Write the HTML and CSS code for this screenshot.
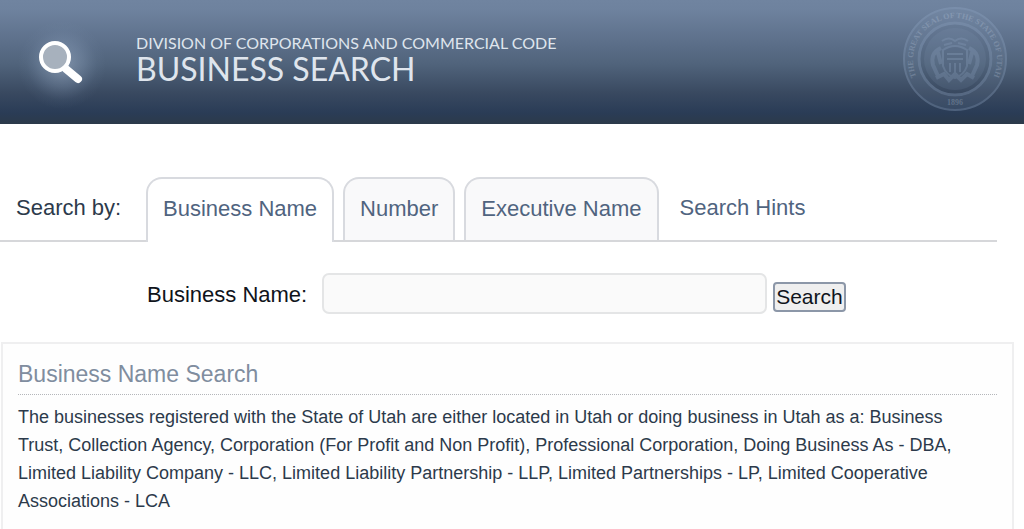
FILE: index.html
```html
<!DOCTYPE html>
<html lang="en">
<head>
<meta charset="utf-8">
<meta name="viewport" content="width=device-width, initial-scale=1">
<title>Business Search</title>
<link rel="stylesheet" href="styles.css">
</head>
<body>
<header class="banner">
  <svg class="lens" viewBox="0 0 90 90" aria-hidden="true">
    <defs>
      <radialGradient id="glow">
        <stop offset="0" stop-color="#b4c4da" stop-opacity=".5"/>
        <stop offset=".5" stop-color="#9db2ce" stop-opacity=".25"/>
        <stop offset=".8" stop-color="#8ea4c2" stop-opacity=".06"/>
        <stop offset="1" stop-color="#8ea4c2" stop-opacity="0"/>
      </radialGradient>
    </defs>
    <circle cx="46" cy="46" r="44" fill="url(#glow)"/>
    <path d="M50 50 62 60" stroke="#fff" stroke-width="8" stroke-linecap="round"/>
    <circle cx="39" cy="38" r="14" fill="#a7b1bd" stroke="#fff" stroke-width="4"/>
  </svg>
  <div class="titles">
    <p class="division">DIVISION OF CORPORATIONS AND COMMERCIAL CODE</p>
    <h1 class="title">BUSINESS SEARCH</h1>
  </div>
  <svg class="seal" viewBox="0 0 106 106" aria-hidden="true">
    <defs>
      <path id="ring" d="M15 72A42 42 0 1 1 91 72"/>
    </defs>
    <g fill="none" stroke="#8fa5c3">
      <circle cx="53" cy="53" r="51" stroke-width="2"/>
      <circle cx="53" cy="53" r="44" stroke-width="13" opacity=".35"/>
      <circle cx="53" cy="53" r="36" stroke-width="3"/>
      <circle cx="53" cy="53" r="31" fill="#8fa5c3" fill-opacity=".35" stroke="none"/>
      <path d="M41 44Q53 36 65 44V60Q62 69 53 72 44 69 41 60Z" fill="#60738e" stroke-width="2"/>
      <path d="M40 35Q47 30 53 35 59 30 66 35M42 39 50 37M56 37 64 39M45 48H61M45 53H61M48 57V66M53 57V68M58 57V66" stroke-width="2"/>
      <path d="M39 42Q28 47 31 59L36 70M67 42Q78 47 75 59L70 70M35 43 39 58M71 43 67 58M34 72 42 68 47 74 53 68 59 74 65 68 72 72" stroke-width="4"/>
    </g>
    <g class="seal-text">
      <text><textPath href="#ring" startOffset="50%">THE GREAT SEAL OF THE STATE OF UTAH</textPath></text>
      <text x="53" y="99">1896</text>
    </g>
  </svg>
</header>
<main>
  <nav class="tabs" aria-label="Search by">
    <span class="tabs-label">Search by:</span>
    <a class="tab tab-active" href="#name" aria-current="page">Business Name</a>
    <a class="tab" href="#number">Number</a>
    <a class="tab" href="#executive">Executive Name</a>
    <a class="hints" href="#hints">Search Hints</a>
  </nav>
  <form class="search">
    <label for="business-name">Business Name:</label>
    <input class="field" id="business-name" type="text">
    <button class="submit" type="submit">Search</button>
  </form>
  <section class="panel">
    <h2 class="panel-title">Business Name Search</h2>
    <p class="panel-text">The businesses registered with the State of Utah are either located in Utah or doing business in Utah as a: Business Trust, Collection Agency, Corporation (For Profit and Non Profit), Professional Corporation, Doing Business As - DBA, Limited Liability Company - LLC, Limited Liability Partnership - LLP, Limited Partnerships - LP, Limited Cooperative Associations - LCA</p>
  </section>
</main>
</body>
</html>
```
FILE: styles.css
```css
* { box-sizing: border-box; }

body {
  margin: 0;
  background: #fff;
  color: #2c3a4b;
  font-family: "Liberation Sans", Arial, sans-serif;
  font-size: 22px;
  line-height: 26px;
}

h1, h2, p { margin: 0; font-weight: 400; }
a { color: #50647f; text-decoration: none; }

.banner {
  display: flex;
  align-items: center;
  height: 124px;
  padding: 0 16px 6px;
  background: linear-gradient(#7084a0 0, #6e829e 8%, #5f728d 30%, #50637b 52%, #394960 75%, #2a3c56 91%, #2c3a4a 100%);
}

.lens { width: 90px; height: 90px; margin-top: 10px; }

.titles {
  flex: 1;
  margin-left: 30px;
  color: #dfe5ed;
  font-family: Lato, sans-serif;
}

.division { font-size: 16px; line-height: 20px; }
.title { font-size: 32px; line-height: 32px; }

.seal { width: 106px; height: 106px; opacity: .35; }

.seal-text {
  fill: #b4c4da;
  font-family: "Liberation Serif", serif;
  font-size: 8px;
  font-weight: 700;
  text-anchor: middle;
}

.tabs {
  display: flex;
  align-items: flex-end;
  gap: 9px;
  margin: 53px 27px 0 0;
  padding-left: 16px;
  border-bottom: 2px solid #d6d7da;
}

.tabs-label { width: 121px; padding-bottom: 19px; }

.tab {
  padding: 17px 15px 18px;
  border: 2px solid #d8dadf;
  border-bottom: 0;
  border-radius: 16px 16px 0 0;
  background: #f9f9fa;
}

.tab-active {
  margin-bottom: -2px;
  padding-bottom: 20px;
  background: #fff;
}

.hints { padding: 0 12px 19px; }

.search {
  display: flex;
  align-items: center;
  margin: 31px 27px 0 147px;
  color: #10141b;
}

.search label { padding-top: 2px; }

.field {
  width: 445px;
  height: 41px;
  margin: 0 6px 0 15px;
  padding: 0 10px;
  border: 2px solid #e4e5e6;
  border-radius: 7px;
  background: #fafafa;
  font: inherit;
}

.submit {
  margin-top: 6px;
  padding: 0 1px;
  border: 2px solid #8c97a8;
  border-radius: 4px;
  background: #efefef;
  color: #10141b;
  font: inherit;
  font-size: 21px;
}

.panel {
  margin: 28px 10px 0 1px;
  padding: 17px 15px 14px;
  border: 2px solid #efeff0;
  border-bottom: 0;
  background: #fefefe;
}

.panel-title {
  padding-bottom: 7px;
  border-bottom: 1px dotted #b4b6ba;
  color: #808d9f;
  font-size: 23px;
}

.panel-text {
  margin-top: 8px;
  padding-right: 20px;
  font-size: 18px;
  line-height: 28px;
}
```
